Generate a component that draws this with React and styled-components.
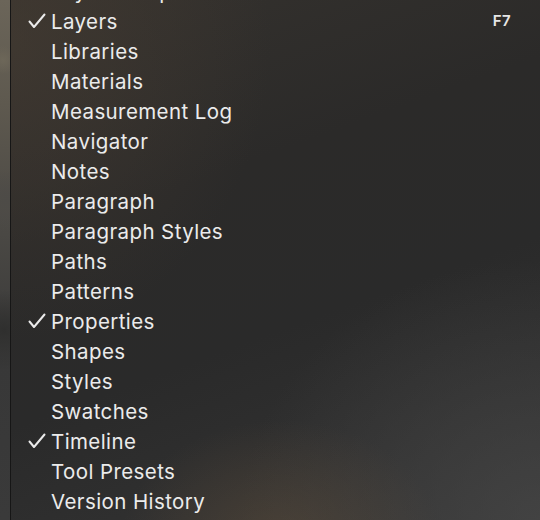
import React from "react";
import styled, { createGlobalStyle } from "styled-components";

const Global = createGlobalStyle`
  html, body { margin: 0; padding: 0; background: #2b2b2b; overflow: hidden; }
  #root { width: 540px; height: 520px; }
`;

const Page = styled.div`
  display: flex;
  width: 540px;
  height: 520px;
  overflow: hidden;
  font-family: Inter, "Liberation Sans", sans-serif;
`;

const Backdrop = styled.div`
  width: 10px;
  flex: none;
  background:
    radial-gradient(circle at 3px 60px, #6d6759 0, transparent 14px),
    radial-gradient(circle at 6px 200px, #4d4b47 0, transparent 30px),
    radial-gradient(circle at 4px 330px, #2f2f2e 0, transparent 40px),
    linear-gradient(180deg, #6b6559 0%, #5e594f 20%, #4a4844 45%, #383838 70%, #3a3a3a 100%);
`;

const Menu = styled.div`
  flex: 1;
  border-left: 1px solid #161616;
  padding: 6px 29px 0 17px;
  display: flex;
  flex-direction: column;
  background:
    radial-gradient(ellipse 160px 120px at 270px 540px, rgba(92, 76, 58, 0.55), transparent),
    radial-gradient(ellipse 260px 300px at 0px 40px, rgba(70, 60, 50, 0.6), transparent),
    radial-gradient(ellipse 300px 260px at 529px 520px, rgba(72, 72, 72, 0.7), transparent),
    linear-gradient(160deg, #35322e 0%, #2b2a29 35%, #2a2a2a 60%, #353535 100%);
`;

const Row = styled.div`
  height: 30px;
  flex: none;
  display: flex;
  align-items: center;
  color: #ebebeb;
  font-size: 20.5px;
  font-weight: 400;
  letter-spacing: 0.4px;
  &:first-child { margin-top: -30px; }
`;

const CheckCell = styled.span`
  width: 23px;
  flex: none;
  display: flex;
  align-items: center;
`;

const Label = styled.span`
  flex: 1;
  white-space: nowrap;
`;

const Shortcut = styled.span`
  font-size: 15px;
  font-weight: 600;
  color: #e6e6e6;
  margin-top: -2px;
`;

const Check = () => (
  <svg width="18" height="16" viewBox="0 0 18 16">
    <polyline
      points="1.5,8.5 6,14 16.5,1.5"
      fill="none"
      stroke="#ebebeb"
      strokeWidth="2"
      strokeLinecap="round"
      strokeLinejoin="round"
    />
  </svg>
);

const items = [
  { label: "Layer Comps" },
  { label: "Layers", checked: true, shortcut: "F7" },
  { label: "Libraries" },
  { label: "Materials" },
  { label: "Measurement Log" },
  { label: "Navigator" },
  { label: "Notes" },
  { label: "Paragraph" },
  { label: "Paragraph Styles" },
  { label: "Paths" },
  { label: "Patterns" },
  { label: "Properties", checked: true },
  { label: "Shapes" },
  { label: "Styles" },
  { label: "Swatches" },
  { label: "Timeline", checked: true },
  { label: "Tool Presets" },
  { label: "Version History" },
];

export default function App() {
  return (
    <Page>
      <Global />
      <Backdrop />
      <Menu>
        {items.map((it) => (
          <Row key={it.label}>
            <CheckCell>{it.checked && <Check />}</CheckCell>
            <Label>{it.label}</Label>
            {it.shortcut && <Shortcut>{it.shortcut}</Shortcut>}
          </Row>
        ))}
      </Menu>
    </Page>
  );
}
